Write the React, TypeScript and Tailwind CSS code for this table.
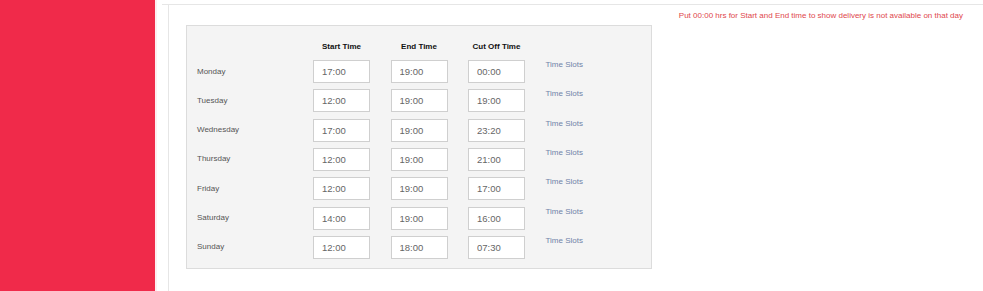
const DAYS = [
  { day: 'Monday', start: '17:00', end: '19:00', cutoff: '00:00' },
  { day: 'Tuesday', start: '12:00', end: '19:00', cutoff: '19:00' },
  { day: 'Wednesday', start: '17:00', end: '19:00', cutoff: '23:20' },
  { day: 'Thursday', start: '12:00', end: '19:00', cutoff: '21:00' },
  { day: 'Friday', start: '12:00', end: '19:00', cutoff: '17:00' },
  { day: 'Saturday', start: '14:00', end: '19:00', cutoff: '16:00' },
  { day: 'Sunday', start: '12:00', end: '18:00', cutoff: '07:30' },
];

function TimeInput({ value }: { value: string }) {
  return (
    <input
      type="text"
      defaultValue={value}
      className="w-[57px] h-[23px] bg-white border border-[#cfcfcf] pl-[8px] text-[9.5px] text-[#666] focus:outline-none"
    />
  );
}

export default function App() {
  return (
    <div className="flex h-[291px] w-[983px] overflow-hidden bg-white font-['Liberation_Sans',Arial,sans-serif]">
      <aside className="w-[155px] shrink-0 bg-[#f02a4a]" />
      <div className="w-[2px] shrink-0 bg-[#fdeef0]" />
      <main className="flex-1 pt-[4px] pl-[5px]">
        <div className="border-t border-[#e6e6e6]">
          <div className="ml-[6px] border-l border-[#e6e6e6] h-[290px]">
            <p className="text-right pr-[20px] pt-[6px] text-[8px] leading-[10px] text-[#e0474d]">
              Put 00:00 hrs for Start and End time to show delivery is not available on that day
            </p>
            <div className="ml-[17px] mt-[4px] w-[466px] bg-[#f4f4f4] border border-[#dcdcdc] pl-[10px] pt-[15px] pb-[9px]">
              <div className="grid grid-cols-[95.5px_57px_57px_57px_auto] gap-x-[20.5px] h-[12px] mb-[7px] text-[8px] font-bold text-[#111] leading-[12px]">
                <div />
                <div className="text-center">Start Time</div>
                <div className="text-center">End Time</div>
                <div className="text-center">Cut Off Time</div>
                <div />
              </div>
              <div className="flex flex-col gap-y-[6.33px]">
                {DAYS.map((d) => (
                  <div key={d.day} className="grid grid-cols-[95.5px_57px_57px_57px_auto] gap-x-[20.5px] items-center h-[23px]">
                    <span className="text-[8px] text-[#555]">{d.day}</span>
                    <TimeInput value={d.start} />
                    <TimeInput value={d.end} />
                    <TimeInput value={d.cutoff} />
                    <a className="self-start text-[8px] leading-[10px] text-[#7083a8] cursor-pointer">Time Slots</a>
                  </div>
                ))}
              </div>
            </div>
          </div>
        </div>
      </main>
    </div>
  );
}
